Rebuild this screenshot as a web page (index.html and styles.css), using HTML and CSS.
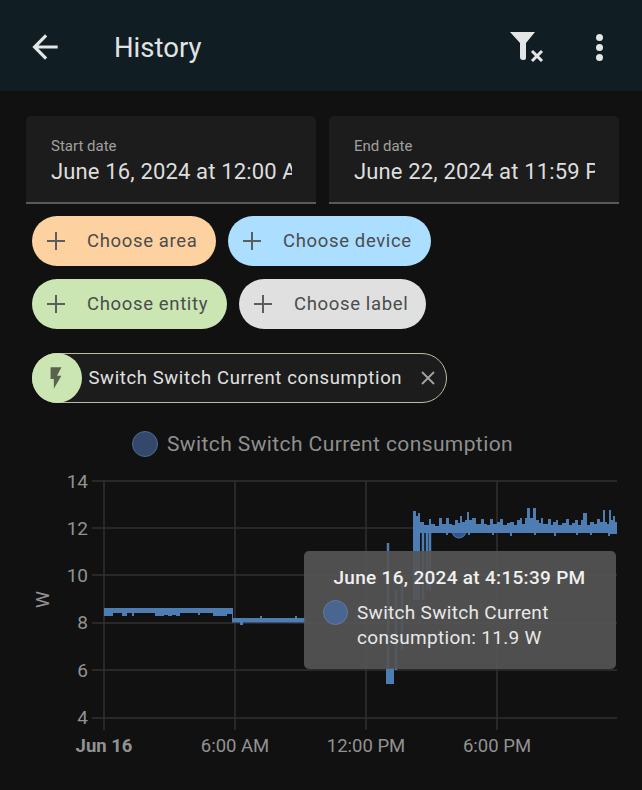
FILE: index.html
```html
<!DOCTYPE html>
<html lang="en">
<head>
    <meta charset="UTF-8">
    <title>History</title>
    <link rel="stylesheet" href="styles.css">
</head>
<body>
    <header class="topbar">
        <svg class="icon-back" viewBox="0 0 24 24"><path d="M20 11H7.83l5.59-5.59L12 4l-8 8 8 8 1.41-1.41L7.83 13H20z"/></svg>
        <h1 class="title">History</h1>
        <svg class="icon-filter" viewBox="0 0 36 32"><path d="M1 1H26L17 12V27Q17 29 15 29H14Q11 29 11 26V12Z"/><path class="cross" d="M23 20L33 30M33 20L23 30"/></svg>
        <div class="dots"><i></i><i></i><i></i></div>
    </header>

    <main class="content">
        <div class="dates">
            <div class="date-field">
                <span class="date-label">Start date</span>
                <span class="date-value">June 16, 2024 at 12:00 AM</span>
            </div>
            <div class="date-field">
                <span class="date-label">End date</span>
                <span class="date-value">June 22, 2024 at 11:59 PM</span>
            </div>
        </div>

        <div class="chips">
            <div class="chip chip-area"><span class="plus"></span>Choose area</div>
            <div class="chip chip-device"><span class="plus"></span>Choose device</div>
            <div class="chip chip-entity"><span class="plus"></span>Choose entity</div>
            <div class="chip chip-label"><span class="plus"></span>Choose label</div>
        </div>

        <div class="selected">
            <span class="selected-icon">
                <svg viewBox="0 0 24 24"><path d="M7 2v11h3v9l7-12h-4l4-8z"/></svg>
            </span>
            <span class="selected-text">Switch Switch Current consumption</span>
            <svg class="selected-close" viewBox="0 0 14 14"><path d="M1 1l12 12M13 1L1 13"/></svg>
        </div>

        <div class="legend">
            <span class="legend-dot"></span>
            <span>Switch Switch Current consumption</span>
        </div>
    </main>

    <div class="chart">
        <svg class="plot" viewBox="0 0 642 315" width="642" height="315">
            <!-- chart top is y=470 on the page -->
            <g class="grid">
                <path d="M92 11H617M92 58H617M92 105H617M92 153H617M92 200H617M92 248H617"/>
                <path d="M104 11V260M235 11V260M366 11V260M497 11V260"/>
            </g>
            <g class="ticks">
                <text x="88" y="18">14</text>
                <text x="88" y="65">12</text>
                <text x="88" y="112">10</text>
                <text x="88" y="159">8</text>
                <text x="88" y="207">6</text>
                <text x="88" y="254">4</text>
            </g>
            <g class="xticks">
                <text class="bold" x="104" y="282">Jun 16</text>
                <text x="235" y="282">6:00 AM</text>
                <text x="366" y="282">12:00 PM</text>
                <text x="497" y="282">6:00 PM</text>
            </g>
            <text class="unit" transform="translate(49 138) rotate(-90)">W</text>

            <circle class="hover-dot" cx="459" cy="61" r="7"/>
            <path class="band" d="M104 138H233V149H232V144H227V146H213V143H200V145H198V143H180V146H176V145H172V146H168V145H164V146H155V143H134V146H132V143H127V146H122V143H113V146H104Z"/>
            <path class="band" d="M232 148H260V146H262V148H295V146H297V148H306V152.500H243V155H240V152.500H232Z"/>
            <path class="line thin" d="M388 73V200M396 120V200M402 110V180"/>
            <path class="band" d="M386 198H394V214H386Z"/>
            <path class="band" d="M413 63H420V130H413Z"/>
            <path class="line thin" d="M423 55V130M427 55V120M430 55V120"/>
            <path class="band" d="M413 41H416V46H418V43H420V52H424V55H429V49H431V54H435V56H439V48H442V54H446V48H449V54H452V55H455V50H458V53H460V46H462V52H465V50H467V42H469V50H472V48H476V54H481V49H484V54H487V55H490V49H493V54H497V52H500V49H503V55H507V53H510V52H514V55H517V50H520V48H522V54H525V48H527V38H530V48H533V38H536V50H539V53H541V48H543V54H548V49H551V55H553V52H556V50H558V55H562V53H566V49H569V55H572V53H575V50H578V55H581V50H583V43H587V55H590V52H594V54H597V49H600V52H603V40H605V52H607V54H609V40H611V50H613V46H615V52H617V64H610V66H608V63H592V65H590V63H578V65H576V63H556V66H554V63H536V65H534V63H512V66H510V63H494V65H492V63H470V65H468V63H448V65H446V63H413Z"/>
        </svg>

        <div class="tooltip">
            <div class="tooltip-date">June 16, 2024 at 4:15:39 PM</div>
            <div class="tooltip-row">
                <span class="tooltip-dot"></span>
                <span>Switch Switch Current consumption: 11.9 W</span>
            </div>
        </div>
    </div>
</body>
</html>
```

FILE: styles.css
```css
* {
    box-sizing: border-box;
}
body {
    margin: 0;
    width: 642px;
    height: 790px;
    overflow: hidden;
    background: #111111;
    color: #e1e1e1;
    font-family: Roboto, "Noto Sans", sans-serif;
}

.topbar {
    display: flex;
    align-items: center;
    height: 91px;
    padding: 3px 38px 0 26px;
    background: #101d23;
}
.icon-back {
    width: 38px;
    height: 38px;
    fill: #e4e6e6;
}
.title {
    margin: 0 0 0 50px;
    font-size: 27.500px;
    font-weight: 400;
    color: #e1e3e3;
    flex: 1;
}
.icon-filter {
    width: 36px;
    height: 32px;
    fill: #e4e6e6;
    margin: 0 51px 0 0;
}
.icon-filter .cross {
    fill: none;
    stroke: #e4e6e6;
    stroke-width: 3;
}
.dots {
    display: flex;
    flex-direction: column;
    gap: 3px;
    width: 8px;
}
.dots i {
    width: 7px;
    height: 7px;
    border-radius: 50%;
    background: #e4e6e6;
}

.content {
    padding: 25px 22px 0 26px;
}
.dates {
    display: flex;
    gap: 13px;
}
.date-field {
    display: flex;
    flex-direction: column;
    width: 290px;
    height: 88px;
    padding: 21px 24px 0 25px;
    background: #1c1c1c;
    border-bottom: 2px solid #5a5a5a;
    border-radius: 5px 5px 0 0;
    overflow: hidden;
}
.date-label {
    font-size: 15px;
    line-height: 18px;
    color: #a0a0a0;
}
.date-value {
    margin-top: 2px;
    font-size: 22px;
    line-height: 30px;
    letter-spacing: 0.15px;
    white-space: nowrap;
    overflow: hidden;
    color: #dedede;
}

.chips {
    display: flex;
    flex-wrap: wrap;
    gap: 13px 12px;
    margin: 12px 0 0 6px;
    width: 440px;
}
.chip {
    display: flex;
    align-items: center;
    height: 50px;
    padding: 0 10px 0 15px;
    border-radius: 25px;
    font-size: 18.500px;
    letter-spacing: 0.65px;
    color: #4a4d4d;
    white-space: nowrap;
}
.chip-area { background: #fdd2a0; width: 184px; }
.chip-device { background: #acdfff; width: 203px; }
.chip-entity { background: #cbe6b3; width: 195px; }
.chip-label { background: #e0e0e0; width: 187px; }
.plus {
    width: 18px;
    height: 18px;
    margin-right: 22px;
    flex: none;
    background:
        linear-gradient(#5c5e5e, #5c5e5e) center / 100% 2px no-repeat,
        linear-gradient(#5c5e5e, #5c5e5e) center / 2px 100% no-repeat;
}

.selected {
    display: flex;
    align-items: center;
    width: 415px;
    height: 50px;
    margin: 24px 0 0 6px;
    background: #1c1c1c;
    border: 1.500px solid #b8bfa0;
    border-radius: 25px;
    font-size: 18.500px;
    letter-spacing: 0.62px;
    color: #e1e1e1;
}
.selected-icon {
    display: flex;
    align-items: center;
    justify-content: center;
    width: 50px;
    height: 50px;
    margin-left: -1.500px;
    border-radius: 50%;
    background: #cbe6b3;
    flex: none;
}
.selected-icon svg {
    width: 26px;
    height: 26px;
    fill: #5a6350;
    margin-left: -2px;
}
.selected-text {
    margin-left: 7px;
    white-space: nowrap;
}
.selected-close {
    width: 14px;
    height: 14px;
    margin-left: 19px;
    fill: none;
    stroke: #a3a3a3;
    stroke-width: 1.800;
}

.legend {
    display: flex;
    align-items: center;
    gap: 9px;
    margin: 27px 0 0 106px;
    height: 28px;
    font-size: 21px;
    letter-spacing: 0.4px;
    color: #8f8f8f;
    white-space: nowrap;
}
.legend-dot {
    width: 26px;
    height: 26px;
    border-radius: 50%;
    background: #33486a;
    border: 1.500px solid #4d6b96;
}

.chart {
    position: absolute;
    top: 470px;
    left: 0;
    width: 642px;
    height: 315px;
}
.plot {
    display: block;
    font-family: Roboto, "Noto Sans", sans-serif;
}
.grid path {
    fill: none;
    stroke: #303030;
    stroke-width: 1.500;
}
.ticks text {
    font-size: 19px;
    fill: #929292;
    text-anchor: end;
}
.xticks text {
    font-size: 18.500px;
    fill: #929292;
    text-anchor: middle;
}
.xticks .bold {
    font-weight: 700;
}
.unit {
    font-size: 19px;
    fill: #929292;
}
.line {
    fill: none;
    stroke: #4e7db3;
    stroke-width: 2;
}
.line.thin {
    stroke-width: 2.500;
}
.band {
    fill: #4e7db3;
}
.hover-dot {
    fill: #33568a;
    stroke: #4e7db3;
}

.tooltip {
    position: absolute;
    left: 304px;
    top: 81px;
    width: 312px;
    height: 118px;
    padding: 16px 20px 0 19px;
    background: rgba(85, 85, 85, 0.92);
    border-radius: 5px;
}
.tooltip-date {
    font-size: 19px;
    font-weight: 500;
    letter-spacing: 0.3px;
    line-height: 22px;
    color: #f0f0f0;
    text-align: center;
    white-space: nowrap;
}
.tooltip-row {
    display: flex;
    align-items: flex-start;
    gap: 9px;
    margin-top: 11px;
    font-size: 19px;
    letter-spacing: 0.3px;
    line-height: 25px;
    color: #e8e8e8;
}
.tooltip-dot {
    width: 25px;
    height: 25px;
    border-radius: 50%;
    background: #4a6690;
    border: 1.500px solid #5d7aa6;
    flex: none;
}
```
